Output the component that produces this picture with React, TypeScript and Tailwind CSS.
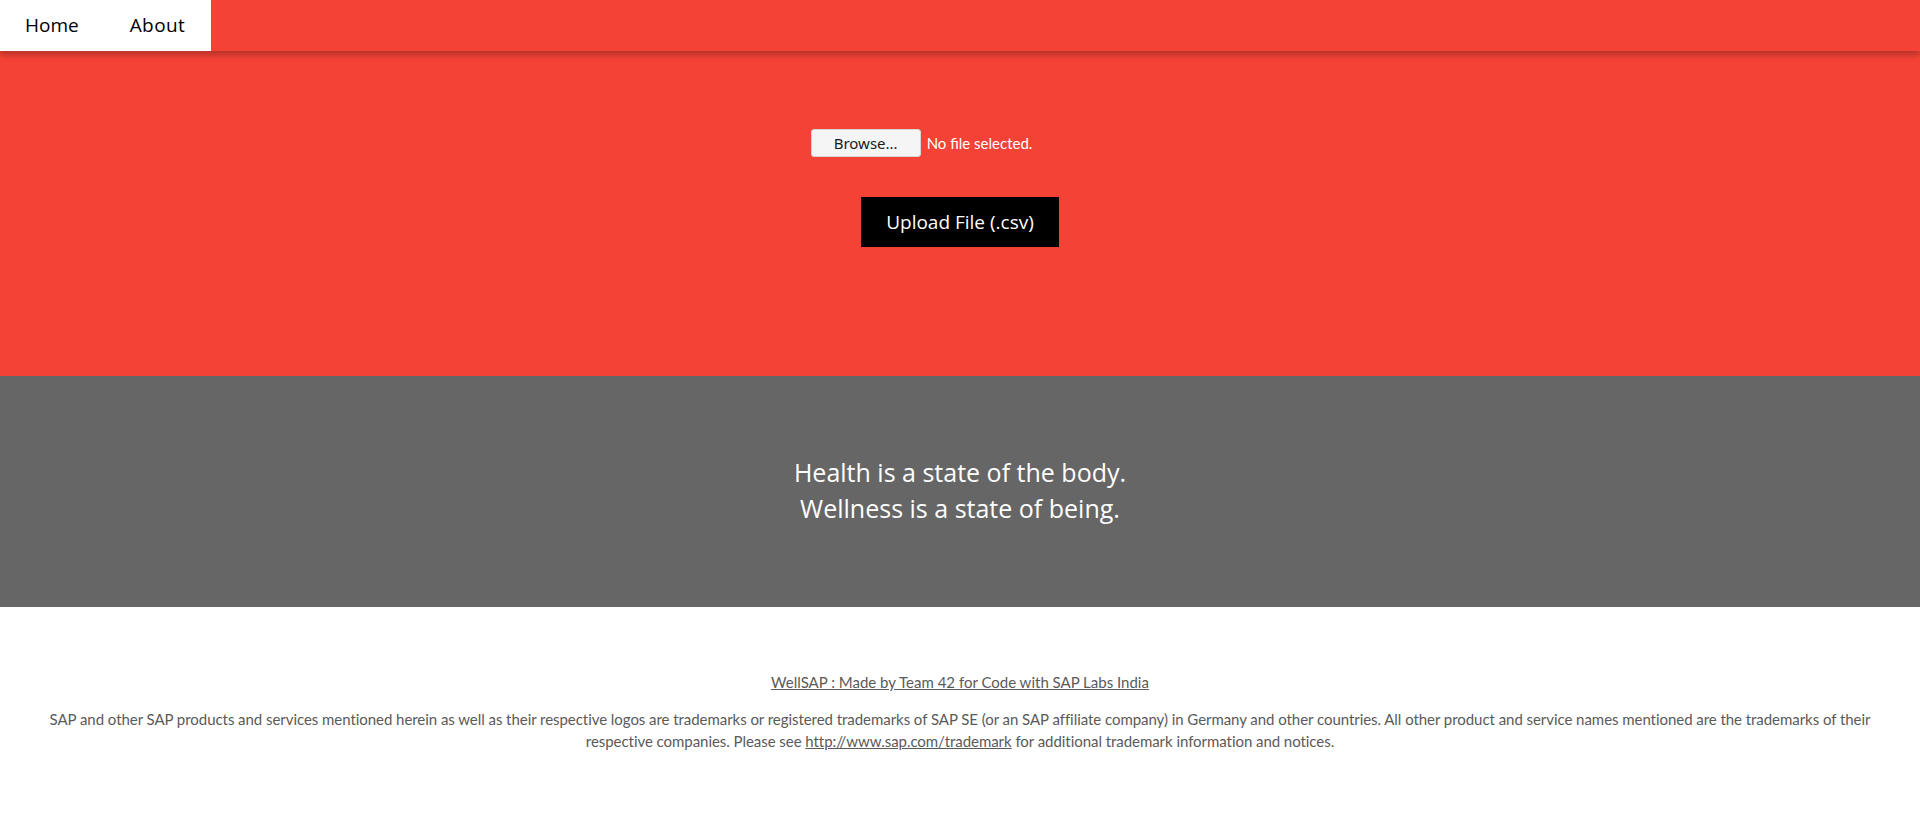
export default function App() {
    const mont = { fontFamily: '"Open Sans", "DejaVu Sans", sans-serif' }

    return <div className="flex flex-col min-h-[840px] bg-white">
        <nav className="relative z-10 flex h-[51px] bg-[#f44336] shadow-[0_4px_6px_rgba(0,0,0,0.25)]">
            <div className="flex bg-white text-[19px] text-black" style={mont}>
                <a className="flex items-center pl-[25px] pr-[26px]">Home</a>
                <a className="flex items-center pl-[25px] pr-[26px] tracking-[0.4px]">About</a>
            </div>
        </nav>

        <section className="flex flex-col items-center h-[325px] bg-[#f44336] pt-[78px]">
            <div className="flex items-center gap-[6px] pr-[77px]" style={{ fontFamily: '"Noto Sans", sans-serif' }}>
                <button className="w-[110px] h-[28px] rounded-[3px] bg-[#f5f5f5] border border-[#d6d6d6] text-[15px] text-[#1a1a1a]">
                    Browse...
                </button>
                <span className="text-[15px] text-white" style={{ fontFamily: 'Lato, sans-serif' }}>No file selected.</span>
            </div>
            <button className="mt-[40px] h-[50px] w-[198px] bg-black text-white text-[19px]" style={mont}>
                Upload File (.csv)
            </button>
        </section>

        <section className="flex flex-col items-center justify-center h-[231px] pb-[3px] bg-[#666666] text-white text-[25px] leading-[36px]" style={mont}>
            <p>Health is a state of the body.</p>
            <p>Wellness is a state of being.</p>
        </section>

        <footer className="flex flex-col items-center px-[34px] pt-[63px] text-[#5a5a5a] text-center" style={{ fontFamily: 'Lato, sans-serif' }}>
            <a className="underline text-[15px] leading-[24px]">WellSAP : Made by Team 42 for Code with SAP Labs India</a>
            <p className="mt-[14px] text-[15px] leading-[22px] tracking-[-0.05px]">
                SAP and other SAP products and services mentioned herein as well as their respective logos are trademarks or registered trademarks of SAP SE (or an SAP affiliate company) in Germany and other countries. All other product and service names mentioned are the trademarks of their respective companies. Please see <a className="underline">http://www.sap.com/trademark</a> for additional trademark information and notices.
            </p>
        </footer>
    </div>
}
